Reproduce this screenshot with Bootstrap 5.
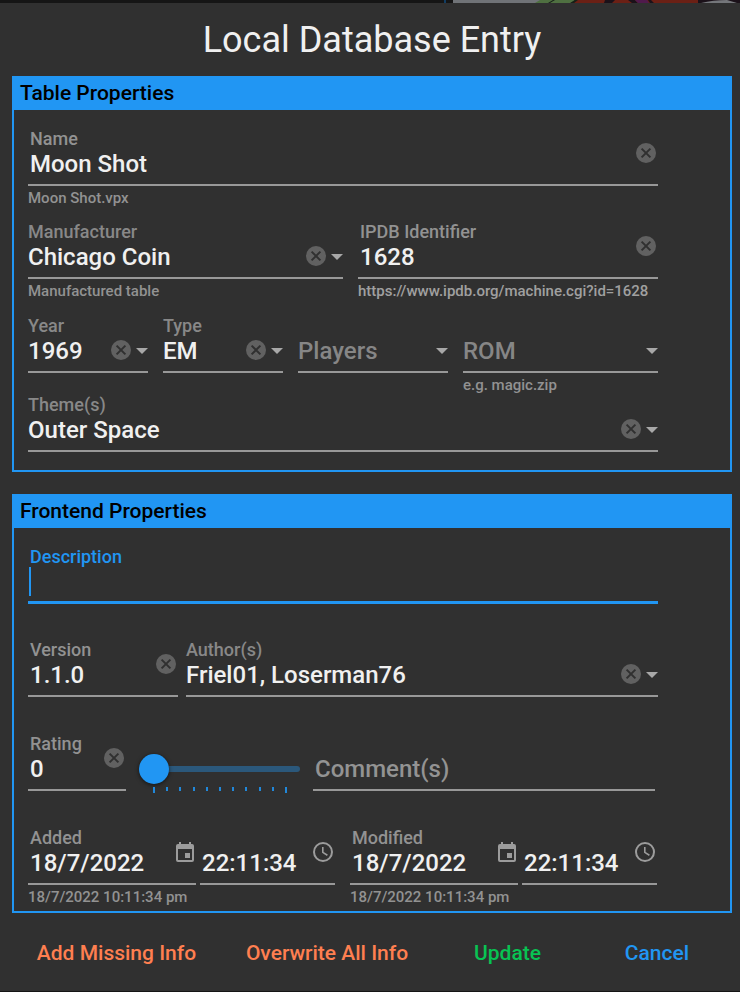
<!DOCTYPE html>
<html lang="en">
<head>
<meta charset="utf-8">
<meta name="viewport" content="width=device-width, initial-scale=1">
<title>Local Database Entry</title>
<link href="https://cdn.jsdelivr.net/npm/bootstrap@5.3.0/dist/css/bootstrap.min.css" rel="stylesheet">
<style>
:root { --accent: #2196f3; --surface: #303030; --line: #989898; --ink: #f0f0f0; }
body { background: var(--surface); color: var(--ink); font-family: Roboto, "Liberation Sans", sans-serif; font-weight: 500; border-bottom: 1px solid #151515; }
.backdrop-strip { display: block; width: 100%; height: 3px; }
.dialog-title { font-size: 36px; line-height: 42px; font-weight: 400; padding: 16px 0 15px; }
.panel { border: 2px solid var(--accent); }
.panel-title { background: var(--accent); color: #000; font-size: 21px; line-height: 30px; padding: 0 6px 2px; font-weight: 500; }
.panel-fields { padding: 19px 72px 0 14px; }
.table-panel .panel-fields { padding-bottom: 18px; }
.frontend-panel { margin-top: 22px; }
.frontend-panel .panel-fields { padding-bottom: 4px; }
.field-row { display: grid; align-items: start; column-gap: 15px; }
.after-hint { margin-top: 14px; }
.after-hint-wide { margin-top: 15px; }
.spaced { margin-top: 37px; }
.spaced-tight { margin-top: 36px; }
.cols-maker { grid-template-columns: 315fr 300fr; }
.cols-specs { grid-template-columns: 120fr 120fr 150fr 195fr; }
.cols-author { grid-template-columns: 150fr 472fr; column-gap: 8px; }
.cols-rating { grid-template-columns: 98fr 161fr 342fr; column-gap: 13px; padding-right: 3px; }
.cols-dates { grid-template-columns: 1fr 1fr; padding-right: 1px; }
.cols-stamp { grid-template-columns: 168fr 135fr; column-gap: 4px; }

.entry { min-width: 0; }
.entry-box { display: grid; grid-template-columns: minmax(0, 1fr) auto auto; grid-template-rows: 20px 30px; padding-bottom: 5px; border-bottom: 2px solid var(--line); }
.entry-box label { grid-area: 1 / 1; font-size: 18px; line-height: 20px; color: #929292; white-space: nowrap; }
.entry-box input, .entry-box select { grid-area: 2 / 1; width: 100%; min-width: 0; height: 30px; padding: 0; margin: 0; border: 0; outline: 0; border-radius: 0; background: transparent; color: var(--ink); font-size: 24px; line-height: 30px; font-weight: 500; appearance: none; }
.entry-box input::placeholder { color: #939393; opacity: 1; }
.entry-box select.blank { color: #868686; }
.entry-box option { background: var(--surface); color: var(--ink); }
.text-entry label, .text-entry input { padding-left: 2px; }
.combo-entry label { color: #888; }
.hint { font-size: 15px; line-height: 20px; height: 22px; padding-top: 2px; color: #929292; white-space: nowrap; }
.hint a { color: #a0a0a0; text-decoration: none; }
.icon-btn { grid-column: 2; display: flex; align-items: center; padding: 0; border: 0; background: transparent; color: #9c9c9c; }
.text-entry .icon-btn { grid-row: 1 / 3; height: 48px; padding-right: 2px; }
.combo-entry .icon-btn { grid-row: 2; height: 28px; padding-right: 5px; }
.combo-entry .drop-arrow { grid-area: 2 / 3; align-self: center; pointer-events: none; fill: #a8a8a8; }
.icon-btn svg, .drop-arrow { display: block; }
.active-entry .entry-box { padding-bottom: 4px; border-bottom: 3px solid var(--accent); grid-template-columns: auto minmax(0, 1fr); }
.active-entry label { color: var(--accent); grid-column: 1 / 3; }
.active-entry input { grid-column: 2; }
.text-cursor { grid-area: 2 / 1; width: 2px; height: 29px; margin-left: 1px; background: var(--accent); }

.rating-slider { height: 57px; padding-top: 19px; }
.rating-slider input { display: block; width: 100%; height: 32px; margin: 0; background: transparent; appearance: none; }
.rating-slider input::-webkit-slider-runnable-track { height: 6px; border-radius: 3px; background: #2b587b; }
.rating-slider input::-webkit-slider-thumb { appearance: none; width: 30px; height: 30px; margin-top: -12px; border: 0; border-radius: 50%; background: var(--accent); box-shadow: 0 1px 4px rgba(0,0,0,.6); }
.ticks { display: flex; justify-content: space-between; height: 6px; margin-top: 2px; padding: 0 13px 0 14px; }
.ticks span { width: 2px; height: 4px; background: #2188da; }
.ticks span:first-child, .ticks span:last-child { height: 6px; }

.dialog-actions { display: grid; grid-template-columns: 209fr 212fr 149fr 150fr; padding: 20px 0 18px; }
.dialog-actions .btn { --bs-btn-font-weight: 500; --bs-btn-font-size: 21px; --bs-btn-line-height: 40px; --bs-btn-padding-y: 0; --bs-btn-padding-x: 0; --bs-btn-border-width: 0; white-space: nowrap; }
.act-coral { color: #ff7f50; }
.act-green { color: #08c353; }
.act-blue { color: var(--accent); }
</style>
</head>
<body>
<svg width="0" height="0" class="d-none" aria-hidden="true">
  <symbol id="clear" viewBox="0 0 20 20"><circle cx="10" cy="10" r="10" fill="#616161"/><path d="M5.6 5.6l8.8 8.8M14.4 5.6l-8.8 8.8" stroke="#303030" stroke-width="2"/></symbol>
  <symbol id="arrow" viewBox="0 0 12 6"><path d="M0 0h12L6 6z"/></symbol>
  <symbol id="calendar" viewBox="0 0 18 20"><path fill="currentColor" fill-rule="evenodd" d="M3 0h2v2h8V0h2v2h1a2 2 0 0 1 2 2v14a2 2 0 0 1-2 2H2a2 2 0 0 1-2-2V4a2 2 0 0 1 2-2h1zM2 7v11h14V7zM9 11h5v5H9z"/></symbol>
  <symbol id="clock" viewBox="0 0 20 20"><circle cx="10" cy="10" r="9" fill="none" stroke="currentColor" stroke-width="2"/><path d="M9.8 5v5.4l4.6 2.8" fill="none" stroke="currentColor" stroke-width="1.6"/></symbol>
</svg>

<svg class="backdrop-strip" viewBox="0 0 740 3" preserveAspectRatio="none" aria-hidden="true">
  <rect width="740" height="3" fill="#151515"/><rect x="444" width="2" height="3" fill="#113d63"/>
  <rect x="453" width="87" height="3" fill="#707377"/><path d="M540 0h35l-4 3h-36z" fill="#4f7041"/><path d="M553 0h2l-5 3h-2zM575 0h4l-5 3h-4z" fill="#172018"/>
  <path d="M578 0h162v3H574z" fill="#6b2015"/><path d="M605 0h10l-3 3h-8zM628 0h7l3 3h-6zM648 0h3l3 3h-4zM698 0h42v3h-42z" fill="#1b1119"/><path d="M635 0h12l2 3h-11z" fill="#501a4c"/><path d="M701 3q12-3 26-3l10 3z" fill="#74767a"/>
</svg>

<main class="px-2">
<form class="ps-1" onsubmit="return false">
  <h1 class="dialog-title text-center m-0">Local Database Entry</h1>

  <section class="panel table-panel">
    <h2 class="panel-title m-0">Table Properties</h2>
    <div class="panel-fields">
      <div class="entry text-entry">
        <div class="entry-box">
          <label for="name">Name</label>
          <input id="name" type="text" value="Moon Shot">
          <button class="icon-btn" type="button" aria-label="Clear name"><svg width="20" height="20"><use href="#clear"/></svg></button>
        </div>
        <div class="hint">Moon Shot.vpx</div>
      </div>

      <div class="field-row cols-maker after-hint">
        <div class="entry combo-entry">
          <div class="entry-box">
            <label for="maker">Manufacturer</label>
            <select id="maker"><option>Chicago Coin</option></select>
            <button class="icon-btn" type="button" aria-label="Clear manufacturer"><svg width="20" height="20"><use href="#clear"/></svg></button>
            <svg class="drop-arrow" width="12" height="6"><use href="#arrow"/></svg>
          </div>
          <div class="hint">Manufactured table</div>
        </div>
        <div class="entry text-entry">
          <div class="entry-box">
            <label for="ipdb">IPDB Identifier</label>
            <input id="ipdb" type="text" value="1628">
            <button class="icon-btn" type="button" aria-label="Clear identifier"><svg width="20" height="20"><use href="#clear"/></svg></button>
          </div>
          <div class="hint"><a href="https://www.ipdb.org/machine.cgi?id=1628">https://www.ipdb.org/machine.cgi?id=1628</a></div>
        </div>
      </div>

      <div class="field-row cols-specs after-hint-wide">
        <div class="entry combo-entry">
          <div class="entry-box">
            <label for="year">Year</label>
            <select id="year"><option>1969</option></select>
            <button class="icon-btn" type="button" aria-label="Clear year"><svg width="20" height="20"><use href="#clear"/></svg></button>
            <svg class="drop-arrow" width="12" height="6"><use href="#arrow"/></svg>
          </div>
        </div>
        <div class="entry combo-entry">
          <div class="entry-box">
            <label for="type">Type</label>
            <select id="type"><option>EM</option></select>
            <button class="icon-btn" type="button" aria-label="Clear type"><svg width="20" height="20"><use href="#clear"/></svg></button>
            <svg class="drop-arrow" width="12" height="6"><use href="#arrow"/></svg>
          </div>
        </div>
        <div class="entry combo-entry">
          <div class="entry-box">
            <select class="blank" aria-label="Players"><option>Players</option></select>
            <svg class="drop-arrow" width="12" height="6"><use href="#arrow"/></svg>
          </div>
        </div>
        <div class="entry combo-entry">
          <div class="entry-box">
            <select class="blank" aria-label="ROM"><option>ROM</option></select>
            <svg class="drop-arrow" width="12" height="6"><use href="#arrow"/></svg>
          </div>
          <div class="hint">e.g. magic.zip</div>
        </div>
      </div>

      <div class="entry combo-entry">
        <div class="entry-box">
          <label for="themes">Theme(s)</label>
          <select id="themes"><option>Outer Space</option></select>
          <button class="icon-btn" type="button" aria-label="Clear themes"><svg width="20" height="20"><use href="#clear"/></svg></button>
          <svg class="drop-arrow" width="12" height="6"><use href="#arrow"/></svg>
        </div>
      </div>
    </div>
  </section>

  <section class="panel frontend-panel">
    <h2 class="panel-title m-0">Frontend Properties</h2>
    <div class="panel-fields">
      <div class="entry text-entry active-entry">
        <div class="entry-box">
          <label for="description">Description</label>
          <span class="text-cursor"></span>
          <input id="description" type="text">
        </div>
      </div>

      <div class="field-row cols-author spaced-tight">
        <div class="entry text-entry">
          <div class="entry-box">
            <label for="version">Version</label>
            <input id="version" type="text" value="1.1.0">
            <button class="icon-btn" type="button" aria-label="Clear version"><svg width="20" height="20"><use href="#clear"/></svg></button>
          </div>
        </div>
        <div class="entry combo-entry">
          <div class="entry-box">
            <label for="authors">Author(s)</label>
            <select id="authors"><option>Friel01, Loserman76</option></select>
            <button class="icon-btn" type="button" aria-label="Clear authors"><svg width="20" height="20"><use href="#clear"/></svg></button>
            <svg class="drop-arrow" width="12" height="6"><use href="#arrow"/></svg>
          </div>
        </div>
      </div>

      <div class="field-row cols-rating spaced">
        <div class="entry text-entry">
          <div class="entry-box">
            <label for="rating">Rating</label>
            <input id="rating" type="text" value="0">
            <button class="icon-btn" type="button" aria-label="Clear rating"><svg width="20" height="20"><use href="#clear"/></svg></button>
          </div>
        </div>
        <div class="rating-slider">
          <input type="range" min="0" max="10" value="0" aria-label="Rating">
          <div class="ticks"><span></span><span></span><span></span><span></span><span></span><span></span><span></span><span></span><span></span><span></span><span></span></div>
        </div>
        <div class="entry text-entry">
          <div class="entry-box">
            <input type="text" placeholder="Comment(s)" aria-label="Comments">
          </div>
        </div>
      </div>

      <div class="field-row cols-dates spaced">
        <div class="field-row cols-stamp">
          <div class="entry text-entry">
            <div class="entry-box">
              <label for="added-date">Added</label>
              <input id="added-date" type="text" value="18/7/2022">
              <button class="icon-btn" type="button" aria-label="Pick added date"><svg width="18" height="20"><use href="#calendar"/></svg></button>
            </div>
            <div class="hint">18/7/2022 10:11:34 pm</div>
          </div>
          <div class="entry text-entry">
            <div class="entry-box">
              <input type="text" value="22:11:34" aria-label="Added time">
              <button class="icon-btn" type="button" aria-label="Pick added time"><svg width="20" height="20"><use href="#clock"/></svg></button>
            </div>
          </div>
        </div>
        <div class="field-row cols-stamp">
          <div class="entry text-entry">
            <div class="entry-box">
              <label for="modified-date">Modified</label>
              <input id="modified-date" type="text" value="18/7/2022">
              <button class="icon-btn" type="button" aria-label="Pick modified date"><svg width="18" height="20"><use href="#calendar"/></svg></button>
            </div>
            <div class="hint">18/7/2022 10:11:34 pm</div>
          </div>
          <div class="entry text-entry">
            <div class="entry-box">
              <input type="text" value="22:11:34" aria-label="Modified time">
              <button class="icon-btn" type="button" aria-label="Pick modified time"><svg width="20" height="20"><use href="#clock"/></svg></button>
            </div>
          </div>
        </div>
      </div>
    </div>
  </section>

  <div class="dialog-actions">
    <button type="button" class="btn act-coral">Add Missing Info</button>
    <button type="button" class="btn act-coral">Overwrite All Info</button>
    <button type="button" class="btn act-green">Update</button>
    <button type="button" class="btn act-blue">Cancel</button>
  </div>
</form>
</main>
<script src="https://cdn.jsdelivr.net/npm/bootstrap@5.3.0/dist/js/bootstrap.bundle.min.js"></script>
</body>
</html>
